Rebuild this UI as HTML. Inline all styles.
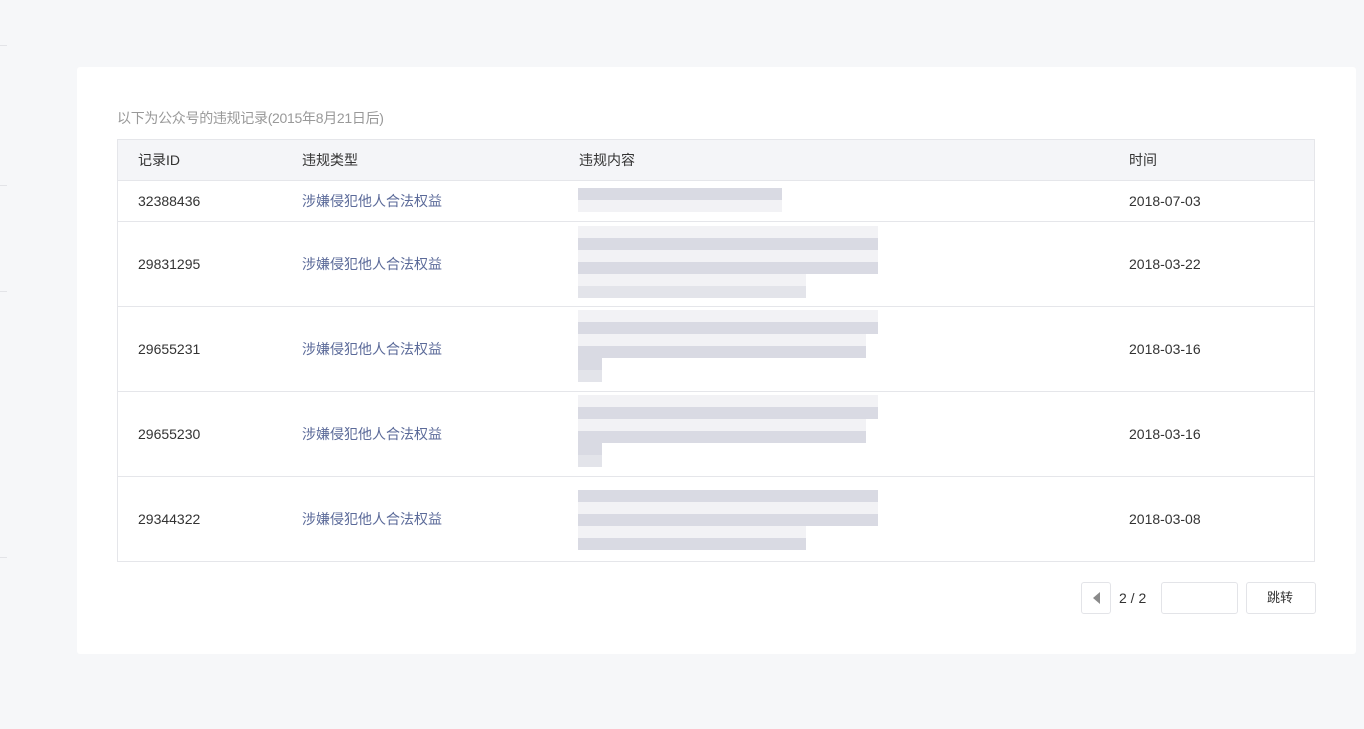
<!DOCTYPE html>
<html><head><meta charset="utf-8"><style>
*{margin:0;padding:0;box-sizing:border-box}
body{width:1364px;height:729px;background:#f6f7f9;font-family:"Liberation Sans","Noto Sans CJK SC",sans-serif;position:relative;overflow:hidden;color:#333}
.card{position:absolute;left:77px;top:67px;width:1279px;height:587px;background:#fff;border-radius:3px}
.a{position:absolute}
.t{position:absolute;font-size:14px;line-height:16px;white-space:nowrap}
.ty{color:#5b6a99}
.d{position:absolute;left:578px;height:12px;background:#d9dae3}
.l{position:absolute;left:578px;height:12px;background:#f2f2f5}
.hl{position:absolute;left:117px;width:1198px;height:1px;background:#e5e6ea}
.box{position:absolute;border:1px solid #e3e4e8;border-radius:3px;background:#fff}
</style></head><body>
<div class="a" style="left:0;top:45px;width:7px;height:1px;background:#e3e4e8"></div>
<div class="a" style="left:0;top:185px;width:7px;height:1px;background:#e3e4e8"></div>
<div class="a" style="left:0;top:291px;width:7px;height:1px;background:#e3e4e8"></div>
<div class="a" style="left:0;top:557px;width:7px;height:1px;background:#e3e4e8"></div>
<div class="card"></div>
<div class="t" style="left:117px;top:110px;font-size:14px;color:#999;letter-spacing:-0.3px">以下为公众号的违规记录(2015年8月21日后)</div>
<div class="a" style="left:117px;top:139px;width:1198px;height:423px;border:1px solid #e5e6ea"></div>
<div class="a" style="left:118px;top:140px;width:1196px;height:40px;background:#f4f5f8"></div>
<div class="hl" style="top:180px"></div>
<div class="hl" style="top:221px"></div>
<div class="hl" style="top:306px"></div>
<div class="hl" style="top:391px"></div>
<div class="hl" style="top:476px"></div>
<div class="t" style="left:138px;top:152px">记录ID</div>
<div class="t" style="left:302px;top:152px">违规类型</div>
<div class="t" style="left:579px;top:152px">违规内容</div>
<div class="t" style="left:1129px;top:152px">时间</div>

<div class="t" style="left:138px;top:193px">32388436</div><div class="t ty" style="left:302px;top:193px">涉嫌侵犯他人合法权益</div><div class="t" style="left:1129px;top:193px">2018-07-03</div>
<div class="t" style="left:138px;top:256px">29831295</div><div class="t ty" style="left:302px;top:256px">涉嫌侵犯他人合法权益</div><div class="t" style="left:1129px;top:256px">2018-03-22</div>
<div class="t" style="left:138px;top:341px">29655231</div><div class="t ty" style="left:302px;top:341px">涉嫌侵犯他人合法权益</div><div class="t" style="left:1129px;top:341px">2018-03-16</div>
<div class="t" style="left:138px;top:426px">29655230</div><div class="t ty" style="left:302px;top:426px">涉嫌侵犯他人合法权益</div><div class="t" style="left:1129px;top:426px">2018-03-16</div>
<div class="t" style="left:138px;top:511px">29344322</div><div class="t ty" style="left:302px;top:511px">涉嫌侵犯他人合法权益</div><div class="t" style="left:1129px;top:511px">2018-03-08</div>

<div class="d" style="top:188px;width:204px"></div><div class="l" style="top:200px;width:204px"></div>

<div class="l" style="top:226px;width:300px"></div><div class="d" style="top:238px;width:300px"></div><div class="l" style="top:250px;width:300px"></div><div class="d" style="top:262px;width:300px"></div><div class="l" style="top:274px;width:228px"></div><div class="d" style="top:286px;width:228px;background:#e3e4ea"></div>

<div class="l" style="top:310px;width:300px"></div><div class="d" style="top:322px;width:300px"></div><div class="l" style="top:334px;width:288px"></div><div class="d" style="top:346px;width:288px"></div><div class="d" style="top:358px;width:24px"></div><div class="d" style="top:370px;width:24px;background:#e3e4ea"></div>

<div class="l" style="top:395px;width:300px"></div><div class="d" style="top:407px;width:300px"></div><div class="l" style="top:419px;width:288px"></div><div class="d" style="top:431px;width:288px"></div><div class="d" style="top:443px;width:24px"></div><div class="d" style="top:455px;width:24px;background:#e3e4ea"></div>

<div class="d" style="top:490px;width:300px"></div><div class="l" style="top:502px;width:300px"></div><div class="d" style="top:514px;width:300px"></div><div class="l" style="top:526px;width:228px"></div><div class="d" style="top:538px;width:228px"></div>

<div class="box" style="left:1081px;top:582px;width:30px;height:32px"></div>
<div class="a" style="left:1093px;top:592px;width:0;height:0;border-top:6px solid transparent;border-bottom:6px solid transparent;border-right:7px solid #8a8a8a"></div>
<div class="t" style="left:1119px;top:590px">2 / 2</div>
<div class="box" style="left:1161px;top:582px;width:77px;height:32px"></div>
<div class="box" style="left:1246px;top:582px;width:70px;height:32px"></div>
<div class="t" style="left:1267px;top:590px;font-size:13px">跳转</div>
</body></html>
